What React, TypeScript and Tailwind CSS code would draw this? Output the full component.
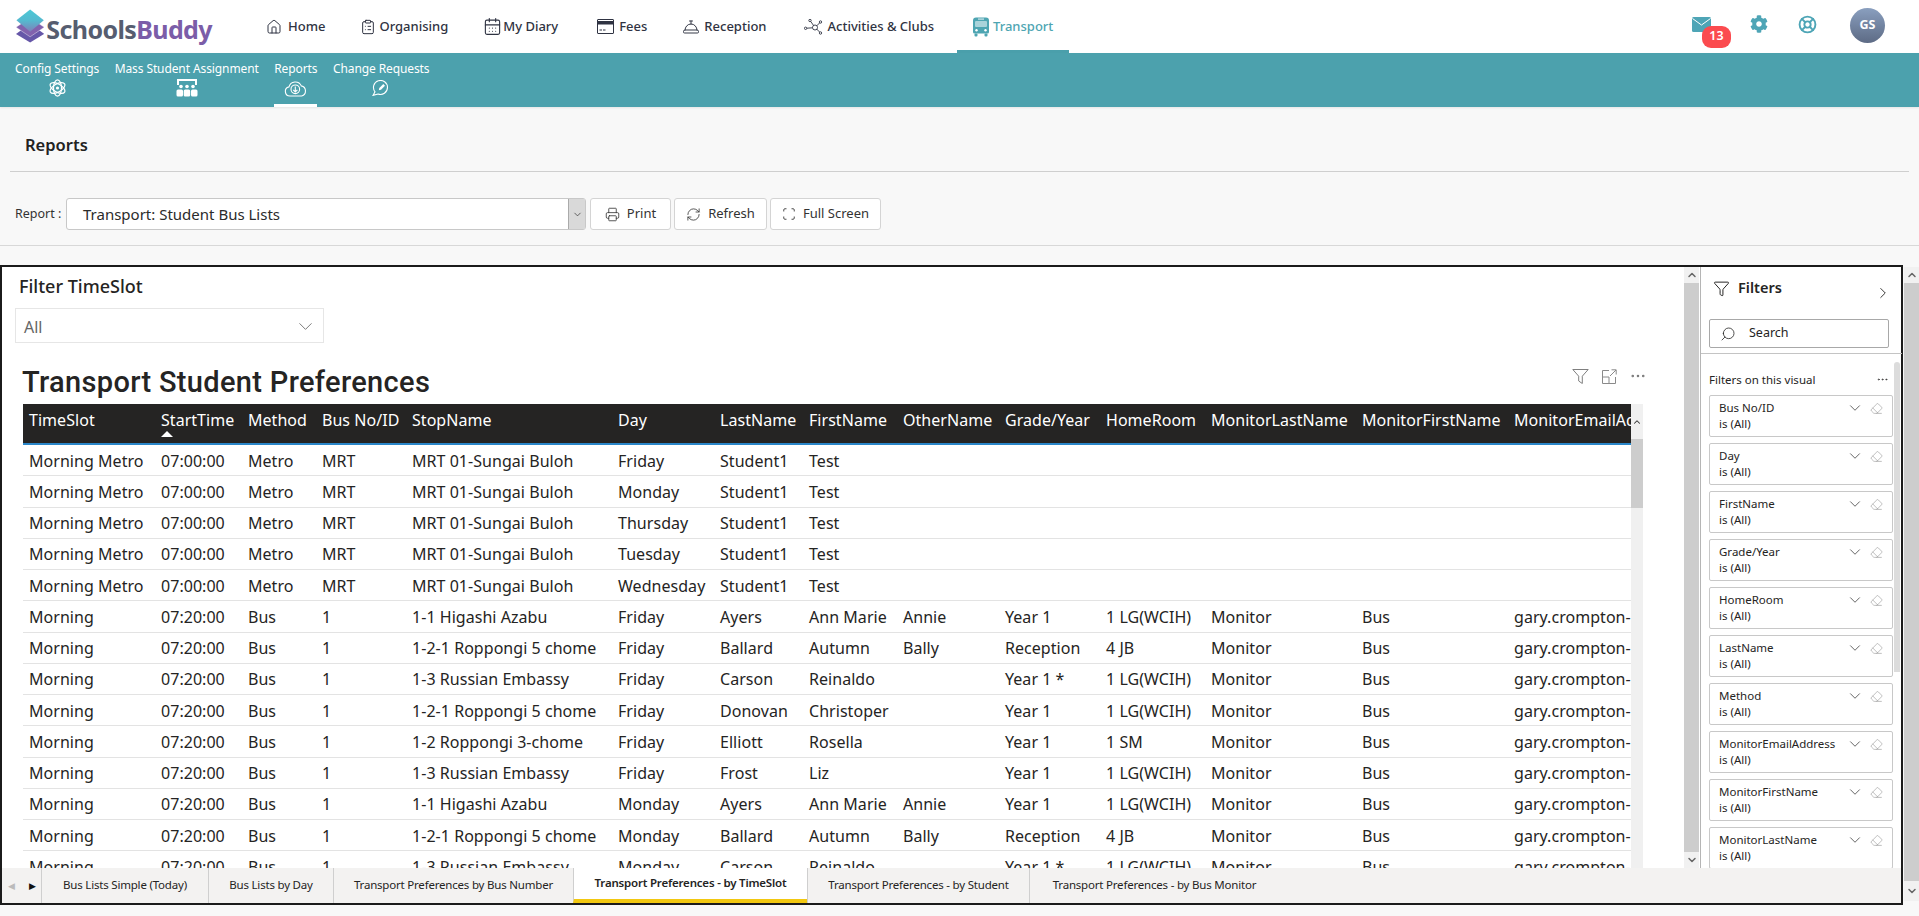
import React from "react";
import { Home, ClipboardList, CalendarDays, ConciergeBell, Printer, RefreshCw, Scan, Funnel, Search, ChevronDown, ChevronRight, ChevronUp, Eraser, Ellipsis, LifeBuoy } from "lucide-react";
import { FaCog } from "react-icons/fa";

function Logo() {
  return (
    <svg width="34" height="40" viewBox="0 0 34 40">
      <defs>
        <linearGradient id="lg" x1="0" y1="0" x2="0" y2="1">
          <stop offset="0" stopColor="#4bc9d6" />
          <stop offset="0.5" stopColor="#55b9cf" />
          <stop offset="1" stopColor="#7f7fb8" />
        </linearGradient>
      </defs>
      <path d="M17 17 L34 29.5 L17 40 L0 29.5Z" fill="#6657a8" />
      <path d="M17 10 L34 21.5 L17 33 L0 21.5Z" fill="#8162ad" stroke="#fff" strokeWidth="0.5" />
      <path d="M17 0 L33.5 13 L17 27 L0.5 13Z" fill="url(#lg)" />
    </svg>
  );
}

function BusIcon() {
  return (
    <svg width="16" height="20" viewBox="0 0 16 20">
      <path d="M3 0.5h10a3 3 0 0 1 3 3V15a1.5 1.5 0 0 1-1.5 1.5h-13A1.5 1.5 0 0 1 0 15V3.5a3 3 0 0 1 3-3Z" fill="#4ea5b2" />
      <rect x="2" y="4" width="12" height="6" rx="1" fill="#a9d3da" />
      <rect x="5" y="1.5" width="6" height="1.2" fill="#cfe6ea" />
      <circle cx="3.5" cy="13.2" r="1.2" fill="#fff" />
      <circle cx="12.5" cy="13.2" r="1.2" fill="#fff" />
      <rect x="1.5" y="16.5" width="3" height="3" rx="1" fill="#4ea5b2" />
      <rect x="11.5" y="16.5" width="3" height="3" rx="1" fill="#4ea5b2" />
    </svg>
  );
}

function MailIcon() {
  return (
    <svg width="19" height="15" viewBox="0 0 19 15">
      <rect x="0" y="0" width="19" height="15" rx="1.5" fill="#4ea5b6" />
      <path d="M0.5 1.5 L9.5 8 L18.5 1.5" fill="none" stroke="#fff" strokeWidth="1" />
    </svg>
  );
}

function FeesIcon() {
  return (
    <svg width="17" height="15" viewBox="0 0 17 15" fill="none" stroke="#2f3342" strokeWidth="1">
      <rect x="0.5" y="0.5" width="16" height="14" rx="0.5" />
      <rect x="0.5" y="2.5" width="16" height="2.5" fill="#2f3342" />
      <path d="M2.5 11h2.5M6 11h2.5" />
    </svg>
  );
}

function NetworkIcon() {
  return (
    <svg width="20" height="16" viewBox="0 0 20 16" fill="none" stroke="#2f3342" strokeWidth="0.9">
      <path d="M6.8 2.6 L9.6 6.5 M12.8 6.8 L15.7 3.8 M2.8 9.2 L8.6 8.8 M12.6 10 L15.6 13" />
      <circle cx="11" cy="8.5" r="2.5" />
      <circle cx="6" cy="1.5" r="1.2" />
      <circle cx="16.5" cy="3" r="1.2" />
      <circle cx="1.6" cy="9.3" r="1.2" />
      <circle cx="16.5" cy="14" r="1.2" />
    </svg>
  );
}

function AtomIcon() {
  return (
    <svg width="17" height="18" viewBox="0 0 17 18" fill="none" stroke="#fff" strokeWidth="1.2">
      <ellipse cx="8.5" cy="9" rx="4" ry="8.2" />
      <ellipse cx="8.5" cy="9" rx="4" ry="8.2" transform="rotate(60 8.5 9)" />
      <ellipse cx="8.5" cy="9" rx="4" ry="8.2" transform="rotate(120 8.5 9)" />
      <circle cx="8.5" cy="9" r="1.6" fill="#fff" stroke="none" />
    </svg>
  );
}

function CloudIcon() {
  return (
    <svg width="23" height="17" viewBox="0 0 23 17" fill="none" stroke="#fff" strokeWidth="1.1">
      <path d="M6 16a4.6 4.6 0 0 1-1-9.1 6.5 6.5 0 0 1 12.3-1 5.2 5.2 0 0 1 .4 10.1Z" />
      <circle cx="11.3" cy="9.3" r="4.3" />
      <path d="M11.3 6.6v5.2M9.2 9.8l2.1 2.1 2.1-2.1" />
    </svg>
  );
}

function Seats() {
  return (
    <svg width="22" height="18" viewBox="0 0 22 18">
      <path d="M2 6V1h18v5" fill="none" stroke="#fff" strokeWidth="2" />
      <circle cx="5" cy="7.5" r="1.8" fill="#fff" /><circle cx="11" cy="7.5" r="1.8" fill="#fff" /><circle cx="17" cy="7.5" r="1.8" fill="#fff" />
      <rect x="0.5" y="10.5" width="6.5" height="7" rx="1.5" fill="#fff" /><rect x="7.7" y="10.5" width="6.5" height="7" rx="1.5" fill="#fff" /><rect x="15" y="10.5" width="6.5" height="7" rx="1.5" fill="#fff" />
    </svg>
  );
}

function BubblePen() {
  return (
    <svg width="18" height="16" viewBox="0 0 18 16" fill="none" stroke="#fff" strokeWidth="1.1">
      <path d="M1 15.4 L3 11.8 A7 7 0 1 1 6 14 Z" />
      <path d="M6.8 10.2 L7.3 8 L11.3 4 L13 5.7 L9 9.7Z" fill="#fff" stroke="none" />
    </svg>
  );
}

function FocusIcon() {
  return (
    <svg width="16" height="15" viewBox="0 0 16 15" fill="none" stroke="#8a8a8a" strokeWidth="1">
      <path d="M8 1.5H1.5v13h13V8" />
      <path d="M1.5 8h6.5v6.5" />
      <path d="M9 7 L15 1M10.5 0.8H15.2V5.5" />
    </svg>
  );
}

function VisualFunnel() {
  return (
    <svg width="17" height="15" viewBox="0 0 17 15" fill="none" stroke="#7f7f7f" strokeWidth="1">
      <path d="M0.8 0.5H16.2L10.3 7.2V14.5L6.7 12V7.2Z" />
    </svg>
  );
}

const SUB = [
  { t: "Config Settings", icon: <AtomIcon /> },
  { t: "Mass Student Assignment", icon: <Seats /> },
  { t: "Reports", icon: <CloudIcon />, active: true },
  { t: "Change Requests", icon: <BubblePen /> },
];

type Row = string[];
const metro = (d: string): Row => ["Morning Metro", "07:00:00", "Metro", "MRT", "MRT 01-Sungai Buloh", d, "Student1", "Test", "", "", "", "", "", ""];
const bus = (s: string, d: string, l: string, f: string, o: string, g: string, h: string): Row => ["Morning", "07:20:00", "Bus", "1", s, d, l, f, o, g, h, "Monitor", "Bus", "gary.crompton-"];
const ROWS: Row[] = [
  metro("Friday"), metro("Monday"), metro("Thursday"), metro("Tuesday"), metro("Wednesday"),
  bus("1-1 Higashi Azabu", "Friday", "Ayers", "Ann Marie", "Annie", "Year 1", "1 LG(WCIH)"),
  bus("1-2-1 Roppongi 5 chome", "Friday", "Ballard", "Autumn", "Bally", "Reception", "4 JB"),
  bus("1-3 Russian Embassy", "Friday", "Carson", "Reinaldo", "", "Year 1 *", "1 LG(WCIH)"),
  bus("1-2-1 Roppongi 5 chome", "Friday", "Donovan", "Christoper", "", "Year 1", "1 LG(WCIH)"),
  bus("1-2 Roppongi 3-chome", "Friday", "Elliott", "Rosella", "", "Year 1", "1 SM"),
  bus("1-3 Russian Embassy", "Friday", "Frost", "Liz", "", "Year 1", "1 LG(WCIH)"),
  bus("1-1 Higashi Azabu", "Monday", "Ayers", "Ann Marie", "Annie", "Year 1", "1 LG(WCIH)"),
  bus("1-2-1 Roppongi 5 chome", "Monday", "Ballard", "Autumn", "Bally", "Reception", "4 JB"),
  bus("1-3 Russian Embassy", "Monday", "Carson", "Reinaldo", "", "Year 1 *", "1 LG(WCIH)"),
];
const COLS = ["TimeSlot", "StartTime", "Method", "Bus No/ID", "StopName", "Day", "LastName", "FirstName", "OtherName", "Grade/Year", "HomeRoom", "MonitorLastName", "MonitorFirstName", "MonitorEmailAddress"];
const GRID = "grid grid-cols-[132px_87px_74px_90px_206px_102px_89px_94px_102px_101px_105px_151px_152px_124px]";

const FILTERS = ["Bus No/ID", "Day", "FirstName", "Grade/Year", "HomeRoom", "LastName", "Method", "MonitorEmailAddress", "MonitorFirstName", "MonitorLastName"];
const TABS = [
  { t: "Bus Lists Simple (Today)", w: "w-[167px]" },
  { t: "Bus Lists by Day", w: "w-[125px]" },
  { t: "Transport Preferences by Bus Number", w: "w-[240px]" },
  { t: "Transport Preferences - by TimeSlot", w: "w-[234px]", active: true },
  { t: "Transport Preferences - by Student", w: "w-[222px]" },
  { t: "Transport Preferences - by Bus Monitor", w: "w-[250px]" },
];

function Btn({ icon, label, w }: { icon: React.ReactNode; label: string; w: string }) {
  return (
    <button className={`${w} h-[32px] flex items-center justify-center gap-[7px] bg-white border border-[#d4d4d4] rounded-[3px] text-[13px] text-[#333]`}>
      {icon}{label}
    </button>
  );
}

const navItem = "flex items-center text-[13px] font-medium text-[#2f3342]";

export default function App() {
  return (
    <div className="w-[1919px] h-[916px] overflow-hidden bg-[#f8f8f8] flex flex-col font-['Noto_Sans',sans-serif] text-[#252423]">
      {/* top bar */}
      <header className="h-[53px] bg-white flex items-center shrink-0">
        <div className="ml-[16px] w-[196px] flex items-center gap-[2px] mt-[-1px]">
          <Logo />
          <span className="text-[25px] font-bold tracking-[-0.6px] leading-none text-[#565d70] mt-[6px]">Schools<span className="text-[#7b5da8]">Buddy</span></span>
        </div>
        <div className={`${navItem} ml-[54px] gap-[6px]`}><Home size={16} strokeWidth={1.5} /><span>Home</span></div>
        <div className={`${navItem} ml-[35px] gap-[3px]`}><ClipboardList size={16} strokeWidth={1.5} /><span>Organising</span></div>
        <div className={`${navItem} ml-[35px] gap-[1px]`}><CalendarDays size={19} strokeWidth={1.4} /><span>My Diary</span></div>
        <div className={`${navItem} ml-[39px] gap-[5px]`}><FeesIcon /><span>Fees</span></div>
        <div className={`${navItem} ml-[35px] gap-[4px]`}><ConciergeBell size={18} strokeWidth={1.3} /><span>Reception</span></div>
        <div className={`${navItem} ml-[37px] gap-[4px]`}><NetworkIcon /><span>Activities &amp; Clubs</span></div>
        <div className="relative ml-[23px] w-[112px] h-[53px] flex items-center justify-center gap-[4px] text-[13px] font-medium text-[#4ea5b2]">
          <BusIcon />
          <span>Transport</span>
          <div className="absolute left-0 right-0 bottom-0 h-[3px] bg-[#4a9fab]" />
        </div>
        <div className="ml-auto flex items-center mr-[34px]">
          <div className="relative mr-[39px] h-[20px]">
            <MailIcon />
            <span className="absolute left-[10px] top-[9px] w-[29px] h-[22px] rounded-[9px] bg-[#fb4b4f] text-white text-[12.5px] font-semibold flex items-center justify-center">13</span>
          </div>
          <FaCog size={18} className="text-[#4ea5b6] mr-[30px] mb-[5px]" />
          <LifeBuoy size={19} strokeWidth={2.4} className="text-[#4ea5b6] mr-[33px] mb-[5px]" />
          <div className="w-[35px] h-[35px] rounded-full bg-gradient-to-b from-[#8a9fbf] to-[#5d6b85] flex items-center justify-center text-white text-[12.5px] font-bold mb-[2px]">GS</div>
        </div>
      </header>

      {/* teal sub nav */}
      <nav className="h-[54px] bg-[#4ca1ad] flex shrink-0 pl-[15px] gap-[15.5px] shadow-[0_1px_2px_rgba(0,0,0,0.08)]">
        {SUB.map((s) => (
          <div key={s.t} className="relative flex flex-col items-center text-white text-[12px] leading-[16px] pt-[8px] font-normal tracking-[-0.1px]">
            <span>{s.t}</span>
            <span className="h-[20px] flex items-center justify-center mt-[1px]">{s.icon}</span>
            {s.active && <div className="absolute left-0 right-0 bottom-0 h-[3px] bg-white" />}
          </div>
        ))}
      </nav>

      {/* report title */}
      <div className="h-[65px] mx-[10px] border-b border-[#cfcfcf] shrink-0 flex items-center pl-[15px]">
        <h1 className="text-[16.5px] font-semibold text-[#222] mt-[13px]">Reports</h1>
      </div>

      {/* report picker */}
      <div className="h-[74px] border-b border-[#d8d8d8] shrink-0 flex items-center pl-[15px] pt-[11px] text-[12.5px] text-[#333]">
        <span className="w-[51px]">Report :</span>
        <div className="w-[520px] h-[32px] bg-white border border-[#c8c8c8] rounded-[3px] flex items-center pl-[16px] text-[15px] text-[#2b2b2b] relative">
          Transport: Student Bus Lists
          <span className="absolute right-0 top-0 bottom-0 w-[17px] bg-[#d9d9d9] border-l border-[#aaa] flex items-center justify-center">
            <ChevronDown size={11} strokeWidth={1.5} />
          </span>
        </div>
        <div className="flex gap-[3px] ml-[4px]">
          <Btn w="w-[81px]" label="Print" icon={<Printer size={15} strokeWidth={1.3} />} />
          <Btn w="w-[93px]" label="Refresh" icon={<RefreshCw size={15} strokeWidth={1.3} />} />
          <Btn w="w-[111px]" label="Full Screen" icon={<Scan size={14} strokeWidth={1.5} />} />
        </div>
      </div>

      {/* embedded report */}
      <div className="flex mt-[19px] h-[640px] shrink-0">
        <div className="w-[1903px] h-[640px] border-2 border-[#1b1b1b] bg-white flex flex-col shrink-0">
          <div className="flex flex-1 min-h-0">
            <div className="w-[1682px] shrink-0 flex flex-col overflow-hidden">
              <div className="mt-[7px] ml-[17px] h-[24px] flex items-center text-[18px] font-medium text-[#252423]">Filter TimeSlot</div>
              <div className="mt-[10px] ml-[13px] w-[309px] h-[35px] border border-[#e6e6e6] flex items-center justify-between pl-[8px] pr-[6px] pt-[2px] text-[16px] text-[#666]">
                <span>All</span>
                <ChevronDown size={23} strokeWidth={0.9} />
              </div>
              <div className="mt-[21px] h-[40px] flex items-center justify-between shrink-0">
                <h2 className="ml-[20px] mt-[-2px] font-['Roboto',sans-serif] text-[29px] font-medium tracking-[0.33px] text-[#252423]">Transport Student Preferences</h2>
                <div className="flex items-center gap-[12px] mr-[37px] mt-[-16px] text-[#777]">
                  <VisualFunnel />
                  <FocusIcon />
                  <Ellipsis size={18} strokeWidth={1.4} />
                </div>
              </div>
              <div className="flex flex-1 min-h-0 ml-[21px]">
                <div className="w-[1608px] shrink-0 overflow-hidden text-[16px] tracking-[0.04px]">
                  <div className={`${GRID} h-[41px] bg-[#252423] text-white border-b-2 border-[#2a86c8]`}>
                    {COLS.map((c) => (
                      <div key={c} className="relative pl-[6px] pt-[4px] whitespace-nowrap overflow-hidden">
                        {c}
                        {c === "StartTime" && <span className="absolute left-[6px] top-[27px] w-0 h-0 border-x-[6px] border-x-transparent border-b-[6px] border-b-white" />}
                      </div>
                    ))}
                  </div>
                  {ROWS.map((r, i) => (
                    <div key={i} className={`${GRID} h-[31.25px] border-b border-[#e3e3e3] items-center text-[#252423]`}>
                      {r.map((c, j) => (
                        <div key={j} className="pl-[6px] pt-[1px] whitespace-nowrap overflow-hidden">{c}</div>
                      ))}
                    </div>
                  ))}
                </div>
                <div className="w-[12px] bg-[#f0f0f0] flex flex-col shrink-0">
                  <div className="h-[35px] flex items-center justify-center"><ChevronUp size={10} strokeWidth={2.5} className="text-[#333]" /></div>
                  <div className="h-[69px] bg-[#cdcdcd]" />
                </div>
              </div>
            </div>
            {/* report scrollbar */}
            <div className="w-[15px] bg-[#cdcdcd] flex flex-col justify-between shrink-0">
              <div className="h-[16px] bg-[#f1f1f1] flex items-center justify-center"><ChevronUp size={12} strokeWidth={3} className="text-[#666]" /></div>
              <div className="h-[16px] bg-[#f1f1f1] flex items-center justify-center"><ChevronDown size={12} strokeWidth={3} className="text-[#666]" /></div>
            </div>
            {/* filters */}
            <aside className="w-[202px] ml-[1px] border-l border-[#b5b5b5] flex flex-col shrink-0 overflow-hidden">
              <div className="h-[52px] flex items-start pt-[12px] pl-[12px] pr-[10px] shrink-0">
                <Funnel size={17} strokeWidth={1.4} className="mt-[1px]" />
                <span className="ml-[8px] text-[14.5px] font-semibold leading-[17px]">Filters</span>
                <ChevronRight size={18} strokeWidth={1.2} className="ml-auto mt-[5px]" />
              </div>
              <div className="ml-[8px] w-[180px] h-[29px] border border-[#a8a8a8] rounded-[2px] flex items-center pl-[10px] text-[12.5px] shrink-0">
                <Search size={16} strokeWidth={1.2} className="-scale-x-100" />
                <span className="ml-[13px]">Search</span>
              </div>
              <div className="mt-[5px] border-t border-[#c4c4c4] flex-1 min-h-0 flex">
                <div className="w-[193px] shrink-0 pl-[8px]">
                  <div className="h-[41px] flex items-center justify-between pr-[5px] pt-[10px] text-[11.5px]">
                    <span>Filters on this visual</span>
                    <Ellipsis size={13} strokeWidth={1.2} />
                  </div>
                  {FILTERS.map((f) => (
                    <div key={f} className="w-[184px] h-[42px] mb-[6px] border border-[#c8c8c8] rounded-[2px] pl-[9px] pr-[9px] pt-[4px] flex justify-between text-[11.5px] leading-[16px]">
                      <div>{f}<br />is (All)</div>
                      <div className="flex gap-[6px] h-[16px] items-center">
                        <ChevronDown size={18} strokeWidth={1} className="text-[#333]" />
                        <Eraser size={13} strokeWidth={1} className="text-[#888]" />
                      </div>
                    </div>
                  ))}
                </div>
                <div className="w-[6px] h-[310px] mt-[8px] bg-[#dcdcdc] rounded-t-[3px]" />
              </div>
            </aside>
          </div>
          {/* tabs */}
          <div className="h-[35px] bg-[#f3f2f1] flex shrink-0 text-[11.5px] text-[#252423] tracking-[-0.2px]">
            <div className="w-[39px] flex items-center justify-center gap-[14px] text-[9px]">
              <span className="text-[#bbb]">◀</span><span className="text-[#111]">▶</span>
            </div>
            {TABS.map((t) => (
              <div key={t.t} className={`${t.w} border-l border-[#cfcfcf] flex items-center justify-center pb-[2px] ${t.active ? "bg-white font-semibold border-b-4 border-b-[#f2c811] pb-0" : ""}`}>{t.t}</div>
            ))}
          </div>
        </div>
        {/* outer scrollbar */}
        <div className="w-[16px] ml-[1px] bg-[#cdcdcd] h-[634px] mt-[2px] flex flex-col justify-between">
          <div className="h-[16px] bg-[#f1f1f1] flex items-center justify-center"><ChevronUp size={12} strokeWidth={3} className="text-[#666]" /></div>
          <div className="h-[20px] bg-[#f1f1f1] flex items-center justify-center"><ChevronDown size={12} strokeWidth={3} className="text-[#666]" /></div>
        </div>
      </div>
    </div>
  );
}
